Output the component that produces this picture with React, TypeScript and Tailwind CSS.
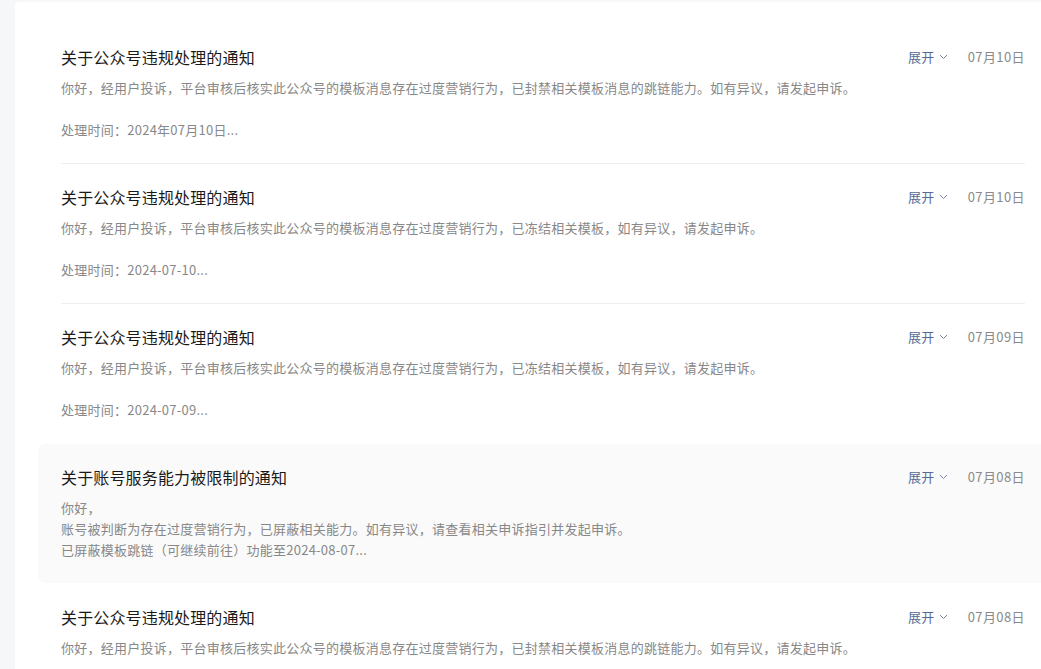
import React from 'react';

type Notice = {
  id: number;
  title: string;
  date: string;
  lines: string[];
  active?: boolean;
};

const notices: Notice[] = [
  {
    id: 1,
    title: '关于公众号违规处理的通知',
    date: '07月10日',
    lines: [
      '你好，经用户投诉，平台审核后核实此公众号的模板消息存在过度营销行为，已封禁相关模板消息的跳链能力。如有异议，请发起申诉。',
      '',
      '处理时间：2024年07月10日...',
    ],
  },
  {
    id: 2,
    title: '关于公众号违规处理的通知',
    date: '07月10日',
    lines: [
      '你好，经用户投诉，平台审核后核实此公众号的模板消息存在过度营销行为，已冻结相关模板，如有异议，请发起申诉。',
      '',
      '处理时间：2024-07-10...',
    ],
  },
  {
    id: 3,
    title: '关于公众号违规处理的通知',
    date: '07月09日',
    lines: [
      '你好，经用户投诉，平台审核后核实此公众号的模板消息存在过度营销行为，已冻结相关模板，如有异议，请发起申诉。',
      '',
      '处理时间：2024-07-09...',
    ],
  },
  {
    id: 4,
    title: '关于账号服务能力被限制的通知',
    date: '07月08日',
    active: true,
    lines: [
      '你好，',
      '账号被判断为存在过度营销行为，已屏蔽相关能力。如有异议，请查看相关申诉指引并发起申诉。',
      '已屏蔽模板跳链（可继续前往）功能至2024-08-07...',
    ],
  },
  {
    id: 5,
    title: '关于公众号违规处理的通知',
    date: '07月08日',
    lines: [
      '你好，经用户投诉，平台审核后核实此公众号的模板消息存在过度营销行为，已封禁相关模板消息的跳链能力。如有异议，请发起申诉。',
      '',
      '处理时间：2024年07月08日...',
    ],
  },
];

const Chevron = () => (
  <svg width="9" height="6" viewBox="0 0 9 6" className="ml-[4px]">
    <path d="M1 1l3.5 3.5L8 1" fill="none" stroke="#7d8aa6" strokeWidth="1" />
  </svg>
);

const App = () => {
  return (
    <div
      className="h-screen w-full overflow-hidden bg-[#f6f7f9] pl-[15px] pt-[2px]"
      style={{ fontFamily: '"Noto Sans CJK SC", "Liberation Sans", sans-serif' }}
    >
      <div className="w-[1056px] min-h-full rounded-tl-[4px] bg-white px-[23px] pt-[22px]">
        {notices.map((n, i) => {
          const next = notices[i + 1];
          const hideLine = n.active || (next && next.active);
          return (
            <React.Fragment key={n.id}>
              <div
                className={`rounded-lg px-[23px] pt-[21px] pb-[23px] ${
                  n.active ? 'bg-[#fafafa]' : ''
                }`}
              >
                {/* header */}
                <div className="flex h-[24px] items-center justify-between">
                  <h3 className="text-[16px] leading-[24px] tracking-[0.15px] text-[#1a1a1a]">
                    {n.title}
                  </h3>
                  <div className="flex items-center text-[13px] tracking-[0.4px]">
                    <span className="flex items-center text-[#576b95]">
                      展开
                      <Chevron />
                    </span>
                    <span className="ml-[20px] text-[#8a8a8a]">{n.date}</span>
                  </div>
                </div>
                {/* content */}
                <div className="mt-2 text-[13px] leading-[21px] tracking-[0.25px] text-[#888888]">
                  {n.lines.map((l, k) => (
                    <p key={k} className="h-[21px] whitespace-nowrap">
                      {l}
                    </p>
                  ))}
                </div>
              </div>
              <div
                className={`mx-[23px] h-px ${
                  hideLine ? 'bg-transparent' : 'bg-[#efefef]'
                }`}
              />
            </React.Fragment>
          );
        })}
      </div>
    </div>
  );
};

export default App;
